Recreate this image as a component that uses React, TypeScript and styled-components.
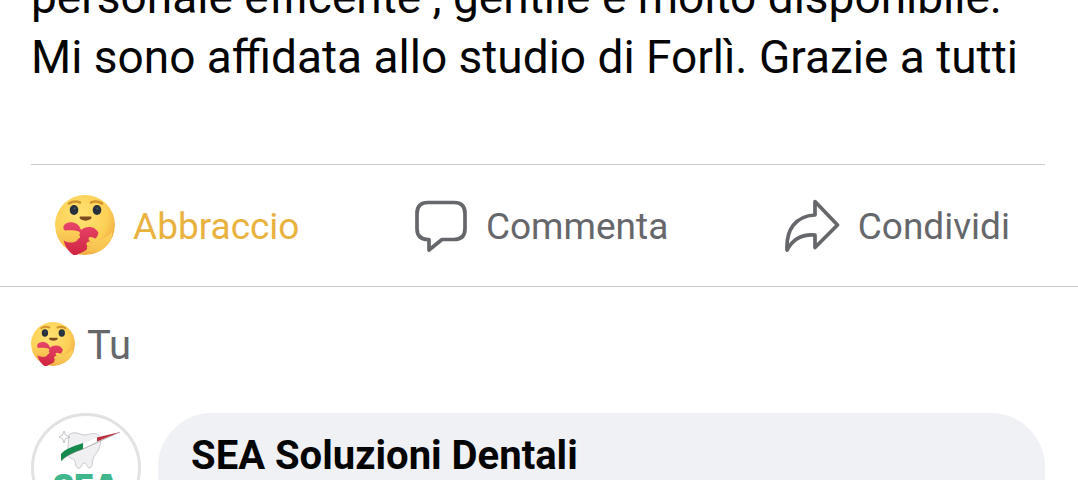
import React from 'react';
import styled, { createGlobalStyle } from 'styled-components';

const GlobalStyle = createGlobalStyle`
  * {
    box-sizing: border-box;
  }

  body {
    margin: 0;
    background: #ffffff;
    color: #050505;
    font-family: Roboto, 'Liberation Sans', sans-serif;
  }
`;

const Page = styled.main`
  height: 100vh;
  overflow: hidden;
`;

const PostText = styled.p`
  margin: -33px 31px 0;
  padding-bottom: 77px;
  font-size: 46px;
  line-height: 60px;
`;

const Actions = styled.div`
  display: flex;
  align-items: center;
  justify-content: space-between;
  margin: 0 33px 0 31px;
  padding: 30px 35px 31px 24px;
  border-top: 1px solid #c8c9cb;
`;

const ActionButton = styled.button<{ $active?: boolean }>`
  display: flex;
  align-items: center;
  gap: 18px;
  padding: 0;
  border: 0;
  background: none;
  color: ${(p) => (p.$active ? '#e9b23f' : '#65676b')};
  font-family: inherit;
  font-size: 37px;
  line-height: 56px;
  cursor: pointer;
`;

const Label = styled.span`
  padding-top: 4px;
`;

const Icon = styled.svg<{ $width: number; $height: number }>`
  display: block;
  flex: none;
  width: ${(p) => p.$width}px;
  height: ${(p) => p.$height}px;
  fill: none;
  stroke: #65676b;
  stroke-linecap: round;
  stroke-linejoin: round;
`;

const Emoji = styled.svg<{ $size: number }>`
  display: block;
  flex: none;
  width: ${(p) => p.$size}px;
  height: ${(p) => p.$size}px;
`;

const Reactions = styled.section`
  display: flex;
  align-items: center;
  gap: 12px;
  padding: 35px 31px 47px;
  border-top: 1px solid #c8c9cb;
  color: #65676b;
  font-size: 40px;
  line-height: 40px;
`;

const Comment = styled.article`
  display: flex;
  align-items: flex-start;
  gap: 17px;
  padding: 0 33px 0 31px;
`;

const Avatar = styled.div`
  display: flex;
  flex: none;
  flex-direction: column;
  align-items: center;
  width: 110px;
  height: 110px;
  overflow: hidden;
  border: 3px solid #e2e2e4;
  border-radius: 50%;
`;

const ToothLogo = styled.svg`
  display: block;
  flex: none;
  width: 104px;
  height: 54px;
`;

const LogoText = styled.span`
  color: #3fb68c;
  font-family: Inter, Roboto, sans-serif;
  font-size: 32px;
  font-weight: 900;
  line-height: 32px;
`;

const Bubble = styled.div`
  flex: 1;
  min-height: 120px;
  padding: 19px 33px;
  border-radius: 54px;
  background: #f0f1f5;
`;

const Author = styled.a`
  color: #050505;
  font-size: 40px;
  font-weight: 700;
  line-height: 48px;
  text-decoration: none;
`;

function HugEmoji({ size, id }: { size: number; id: string }) {
  return (
    <Emoji $size={size} viewBox="0 0 60 60" aria-hidden="true">
      <defs>
        <radialGradient id={`${id}-face`} cx="0.42" cy="0.35" r="0.65">
          <stop offset="0" stopColor="#ffe274" />
          <stop offset="0.7" stopColor="#fcd055" />
          <stop offset="1" stopColor="#f1ad45" />
        </radialGradient>
        <linearGradient id={`${id}-heart`} x1="0" y1="0" x2="0" y2="1">
          <stop offset="0" stopColor="#e8456a" />
          <stop offset="1" stopColor="#cf2440" />
        </linearGradient>
        <linearGradient id={`${id}-arm`} x1="0" y1="0" x2="0" y2="1">
          <stop offset="0" stopColor="#fdd45a" />
          <stop offset="1" stopColor="#f6bf50" />
        </linearGradient>
        <clipPath id={`${id}-clip`}>
          <path d="M0 0H60V30C60 48 47 60 30 60H18C7 55 0 43 0 30Z" />
        </clipPath>
      </defs>
      <g clipPath={`url(#${id}-clip)`}>
        <circle cx="30" cy="30" r="30" fill={`url(#${id}-face)`} />
        <path d="M14 8.500C17 6.500 21 6 25 7.500M36 7.500C40 6 44 6.500 47 8.500" fill="none" stroke="#d0932c" strokeWidth="2.600" strokeLinecap="round" />
        <ellipse cx="19" cy="15" rx="4.300" ry="5" fill="#27303c" />
        <ellipse cx="42" cy="15" rx="4.300" ry="5" fill="#27303c" />
        <circle cx="19.500" cy="13.500" r="0.900" fill="#4d6078" />
        <circle cx="42.500" cy="13.500" r="0.900" fill="#4d6078" />
        <path d="M26 21.500H35C37 21.500 37 23.500 35 24.500C32 26 29 26 26 24.500C24 23.500 24 21.500 26 21.500Z" fill="#7d4a20" />
        <path d="M8.500 31C11 26 23 25 26 35C31 30 41 31 43.500 38C42 44 36 48 33 53C30 57 24 58 20 61C14 58 9 50 8.500 44Z" fill={`url(#${id}-heart)`} />
        <path d="M2 31C5 31 7 33 10 35.500C14 35 20 35 24 36.500C25.500 37.500 25 39 24 40C26 41 25.500 43 23 44C22 46.500 19 48 15 47.500C9 47 4 43 2 38Z" fill={`url(#${id}-arm)`} />
        <path d="M57 37C53 41 49 44 45 45C41 44 38 42 35 42C33 42.500 33 44.500 35 46.500C31.500 46.500 30.500 49 32.500 51C31 53 32.500 55.500 36 57C46 59 54 50 57 42Z" fill={`url(#${id}-arm)`} />
        <path d="M35 46.500L37.500 48M32.500 51L35.500 52" stroke="#ecac45" strokeWidth="0.700" />
      </g>
    </Emoji>
  );
}

function CommentIcon() {
  return (
    <Icon $width={54} $height={54} viewBox="0 0 54 54" strokeWidth="3.700" aria-hidden="true">
      <path d="M14 4.500H40Q51 4.500 51 15.500V30.500Q51 41.500 40 41.500H28L15 52V41.500H14Q3 41.500 3 30.500V15.500Q3 4.500 14 4.500Z" />
    </Icon>
  );
}

function ShareIcon() {
  return (
    <Icon $width={57} $height={54} viewBox="0 0 57 54" strokeWidth="3.700" aria-hidden="true">
      <path d="M32 3.500L54.500 27L32 49.500V37C21 36 11 39 4 52C3 32 12 18 32 17Z" />
    </Icon>
  );
}

function Tooth() {
  return (
    <ToothLogo viewBox="3 3 104 54" aria-hidden="true">
      <path d="M38 22C43 17 49 22 54 22C60 21 66 18 69 24C71 31 68 37 64 42C60 47 63 53 59 55C56 56 56 49 53 50C50 51 51 56 47 55C43 54 46 48 42 46C35 45 37 39 37 34Z" fill="#f0f0f2" stroke="#cacace" strokeWidth="1" />
      <path d="M33 18L34.500 22L39 24L34.500 25.500L33 30L31.500 25.500L28 24L31.500 22Z" fill="#ffffff" stroke="#c2c2c8" strokeWidth="1" />
      <path d="M52 30L66 24V29L52 36Z" fill="#ffffff" stroke="#dddddf" strokeWidth="0.500" />
      <path d="M30 48V41C34 36 43 33 52 30V36C44 39 36 42 30 48Z" fill="#168a4c" />
      <path d="M66 24.500L89 19L66 28.500Z" fill="#b92d3c" />
      <path d="M30 48C36 42 44 39 52 36L89 19" fill="none" stroke="#77777c" strokeWidth="0.500" />
    </ToothLogo>
  );
}

export default function App() {
  return (
    <>
      <GlobalStyle />
      <Page>
        <PostText>
          personale efficente , gentile e molto disponibile.
          <br />
          Mi sono affidata allo studio di Forlì. Grazie a tutti
        </PostText>
        <Actions>
          <ActionButton type="button" $active aria-pressed="true">
            <HugEmoji size={60} id="action" />
            <Label>Abbraccio</Label>
          </ActionButton>
          <ActionButton type="button">
            <CommentIcon />
            <Label>Commenta</Label>
          </ActionButton>
          <ActionButton type="button">
            <ShareIcon />
            <Label>Condividi</Label>
          </ActionButton>
        </Actions>
        <Reactions>
          <HugEmoji size={44} id="summary" />
          <Label>Tu</Label>
        </Reactions>
        <Comment>
          <Avatar>
            <Tooth />
            <LogoText>SEA</LogoText>
          </Avatar>
          <Bubble>
            <Author href="#">SEA Soluzioni Dentali</Author>
          </Bubble>
        </Comment>
      </Page>
    </>
  );
}
